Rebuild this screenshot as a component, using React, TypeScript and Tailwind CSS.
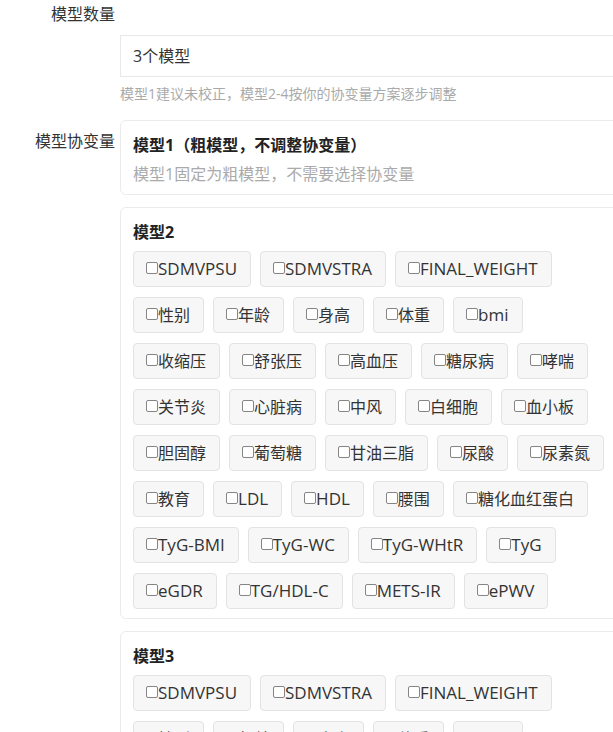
import React from 'react';

const rows: string[][] = [
  ['SDMVPSU', 'SDMVSTRA', 'FINAL_WEIGHT'],
  ['性别', '年龄', '身高', '体重', 'bmi'],
  ['收缩压', '舒张压', '高血压', '糖尿病', '哮喘'],
  ['关节炎', '心脏病', '中风', '白细胞', '血小板'],
  ['胆固醇', '葡萄糖', '甘油三脂', '尿酸', '尿素氮'],
  ['教育', 'LDL', 'HDL', '腰围', '糖化血红蛋白'],
  ['TyG-BMI', 'TyG-WC', 'TyG-WHtR', 'TyG'],
  ['eGDR', 'TG/HDL-C', 'METS-IR', 'ePWV'],
];

const isLatin = (s: string) => /^[\x00-\x7f]+$/.test(s);

const Chip: React.FC<{ label: string }> = ({ label }) => (
  <label className="flex h-9 items-center rounded-[4px] border border-[#e3e3e3] bg-[#f7f7f7] pl-3 pr-[13px] text-[#333]">
    <span className="mb-[2px] inline-block h-3 w-3 shrink-0 rounded-[2px] border border-[#858585] bg-white" />
    <span className={isLatin(label) ? 'text-[17px] leading-5' : 'text-[16px] leading-5'}>{label}</span>
  </label>
);

const ModelCard: React.FC<{ title: string }> = ({ title }) => (
  <div className="mb-3 rounded-md border border-[#ebebeb] bg-white px-3 pb-[9px] pt-3">
    <div className="mb-[7px] text-[16px] font-bold leading-6 text-[#222]">{title}</div>
    <div className="flex flex-col gap-[10px]">
      {rows.map((row, i) => (
        <div key={i} className="flex gap-[9px]">
          {row.map((c) => (
            <Chip key={c} label={c} />
          ))}
        </div>
      ))}
    </div>
  </div>
);

export default function App() {
  return (
    <div
      className="h-[732px] w-[613px] overflow-hidden bg-white text-[#333]"
      style={{ fontFamily: '"Open Sans", "Noto Sans CJK SC", sans-serif' }}
    >
      {/* 模型数量 */}
      <div className="w-[115px] text-right text-[16px] leading-7">模型数量</div>
      <div className="ml-[120px] mt-[7px] w-[520px]">
        <div className="flex h-[42px] items-center border border-[#e8e8e8] bg-white px-3 text-[16px]">
          3个模型
        </div>
        <div className="mt-[7px] text-[14px] leading-5 text-[#aaa]">
          模型1建议未校正，模型2-4按你的协变量方案逐步调整
        </div>
      </div>

      {/* 模型协变量 */}
      <div className="mt-4 flex gap-[5px]">
        <div className="w-[115px] shrink-0 pt-[9px] text-right text-[16px] leading-6">模型协变量</div>
        <div className="w-[520px] shrink-0">
          <div className="mb-3 rounded-md border border-[#ebebeb] bg-white px-3 pb-[9px] pt-3">
            <div className="text-[16px] font-bold leading-6 text-[#222]">模型1（粗模型，不调整协变量）</div>
            <div className="mt-[6px] text-[16px] leading-[22px] text-[#aaa]">
              模型1固定为粗模型，不需要选择协变量
            </div>
          </div>
          <ModelCard title="模型2" />
          <ModelCard title="模型3" />
        </div>
      </div>
    </div>
  );
}
